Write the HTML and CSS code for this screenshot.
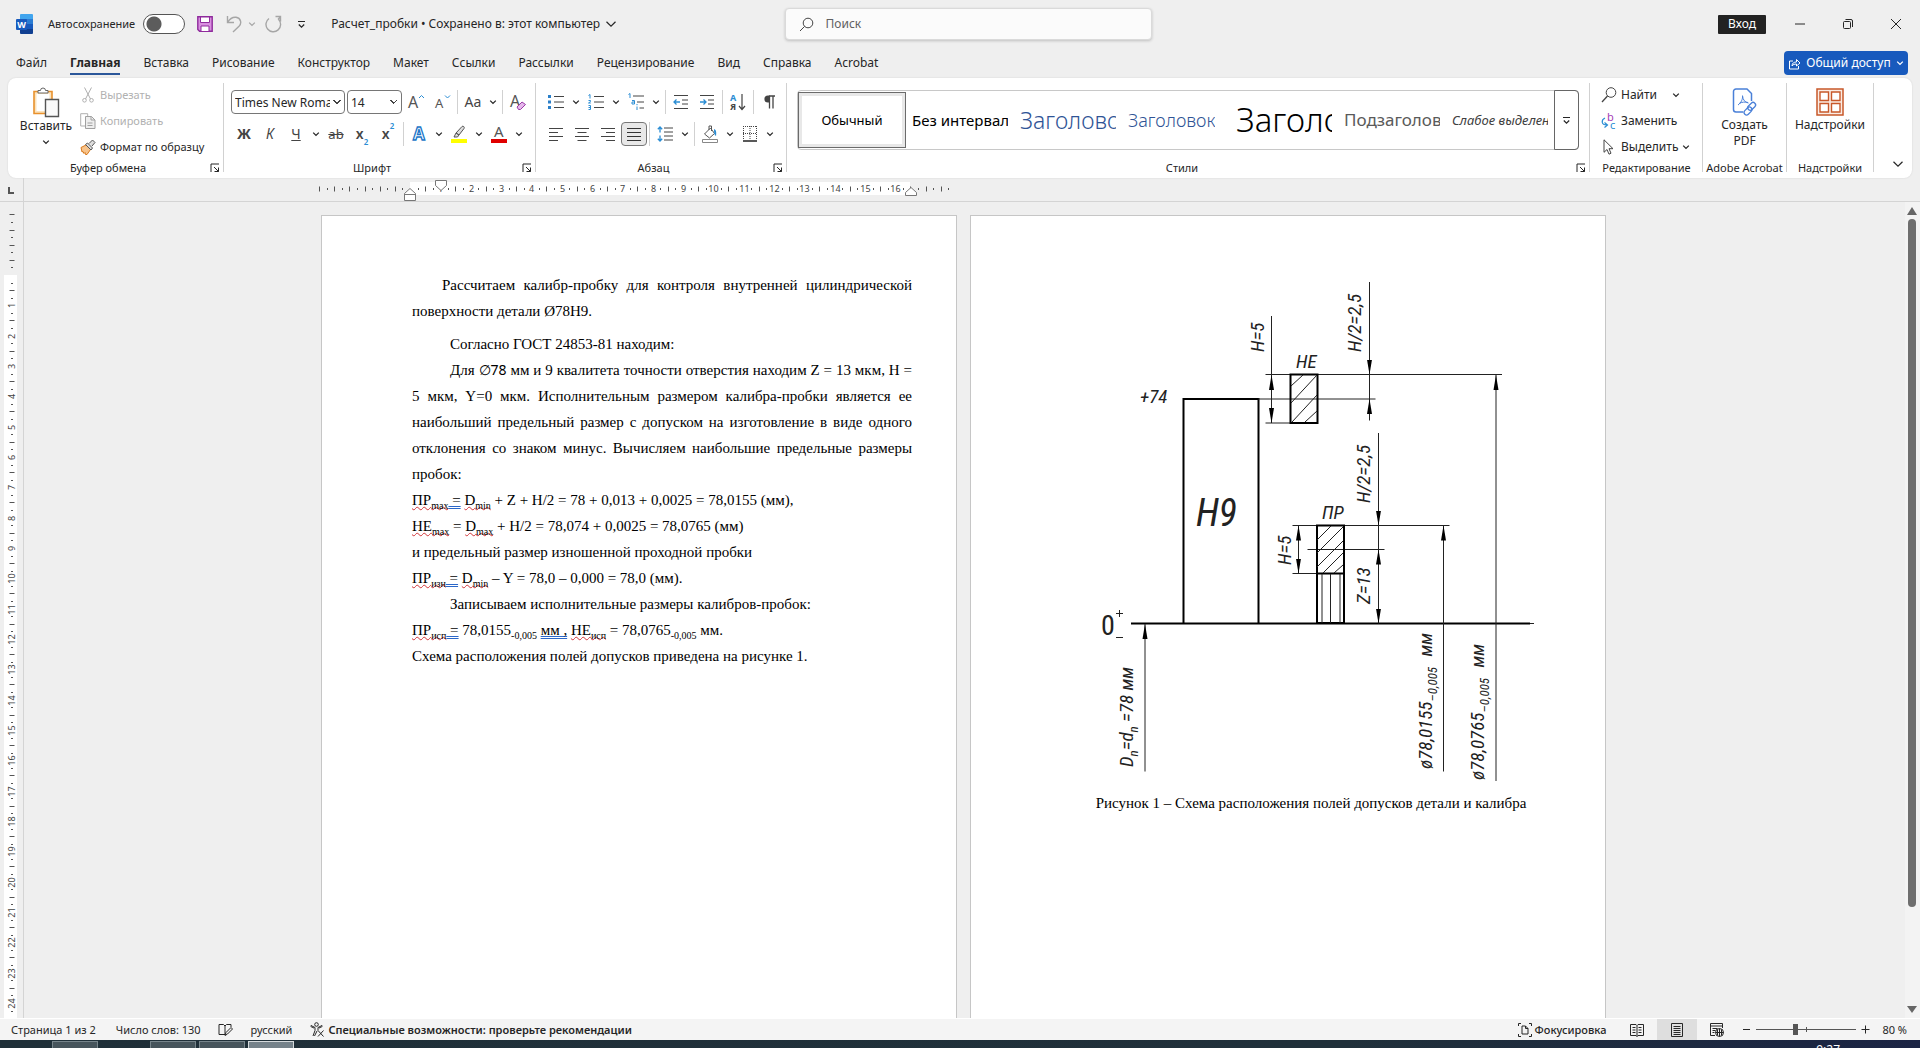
FILE: index.html
```html
<!DOCTYPE html>
<html lang="ru">
<head>
  <meta charset="UTF-8" />
  <meta name="viewport" content="width=device-width, initial-scale=1.0"/>
  <title>Расчет_пробки</title>
  <link rel="stylesheet" href="styles.css">
</head>
<body>
  <!-- shared shapes -->
  <svg class="defs" width="0" height="0" aria-hidden="true">
    <symbol id="chev" viewBox="0 0 8 8"><path d="M1.2 2.6 4 5.4 6.8 2.6" fill="none" stroke="currentColor" stroke-width="1.3"/></symbol>
    <symbol id="launcher" viewBox="0 0 10 10"><path d="M1 9V1h8M4 4l4.5 4.5M8.5 4.5v4h-4" fill="none" stroke="currentColor"/></symbol>
  </svg>

  <header class="titlebar">
    <div class="title-left">
      <svg class="logo" width="17" height="20" viewBox="0 0 17 20">
        <path fill="#41a5ee" d="M5 0h11a1 1 0 0 1 1 1v4H4V1a1 1 0 0 1 1-1z"/>
        <path fill="#2b7cd3" d="M4 5h13v5H4z"/>
        <path fill="#185abd" d="M4 10h13v5H4z"/>
        <path fill="#103f91" d="M4 15h13v4a1 1 0 0 1-1 1H5a1 1 0 0 1-1-1z"/>
        <rect x="0" y="5" width="11" height="11" rx="1" fill="#185abd"/>
        <text x="5.500" y="14" class="logo-letter">W</text>
      </svg>
      <label class="autosave">Автосохранение <input type="checkbox" class="switch"></label>
      <button class="quick save" aria-label="Сохранить">
        <svg width="16" height="16" viewBox="0 0 16 16"><path d="M.8.8h14.4v14.4H2.600L.8 13.400z" fill="#d98fe0" stroke="#8f2b9c" stroke-width="1.400"/><path d="M3.500 1h9v5.500h-9z" fill="#fff" stroke="#8f2b9c"/><path d="M4 15v-5h8v5" fill="#fff" stroke="#8f2b9c"/></svg>
      </button>
      <button class="quick undo muted" aria-label="Отменить">
        <svg width="16" height="18" viewBox="0 0 16 18"><path d="M1.500 1v6.500H8M1.800 7.200C4 3.500 7 2 10 2.300c5 .7 6 6 3 9L7 17" fill="none" stroke="currentColor" stroke-width="1.400"/></svg>
        <svg width="8" height="8"><use href="#chev"/></svg>
      </button>
      <button class="quick muted" aria-label="Повторить">
        <svg width="17" height="18" viewBox="0 0 17 18"><path d="M10.500 1.500h5v5M15.200 2 13 4.500M4 3.500a7.300 7.300 0 1 0 9.500.8" fill="none" stroke="currentColor" stroke-width="1.400"/></svg>
      </button>
      <button class="quick custom" aria-label="Настройка панели"><svg width="9" height="9" viewBox="0 0 9 9"><path d="M1 1.500h7M1.800 4.500 4.500 7.200l2.700-2.700" fill="none" stroke="currentColor" stroke-width="1.200"/></svg></button>
      <button class="doc-name">Расчет_пробки&nbsp;•&nbsp;Сохранено в: этот компьютер <svg width="12" height="12" viewBox="0 0 8 8"><path d="M1 2.500 4 5.500 7 2.500" fill="none" stroke="currentColor" stroke-width=".8"/></svg></button>
    </div>
    <div class="search">
      <svg width="15" height="15" viewBox="0 0 15 15"><circle cx="9" cy="6" r="4.800" fill="none" stroke="#444"/><path d="M5.600 9.400 1 14" stroke="#444"/></svg>
      <input type="text" placeholder="Поиск" aria-label="Поиск">
    </div>
    <div class="title-right">
      <button class="sign-in">Вход</button>
      <button class="win" aria-label="Свернуть"><svg width="12" height="12" viewBox="0 0 12 12"><path d="M1 6h10" stroke="currentColor"/></svg></button>
      <button class="win" aria-label="Восстановить"><svg width="12" height="12" viewBox="0 0 12 12"><rect x="1.500" y="3.500" width="7" height="7" rx="1" fill="none" stroke="currentColor"/><path d="M3.500 1.500H9a1.500 1.500 0 0 1 1.500 1.500v6" fill="none" stroke="currentColor"/></svg></button>
      <button class="win" aria-label="Закрыть"><svg width="12" height="12" viewBox="0 0 12 12"><path d="m1 1 10 10M11 1 1 11" stroke="currentColor"/></svg></button>
    </div>
  </header>

  <nav class="tabs">
    <button>Файл</button>
    <button class="active">Главная</button>
    <button>Вставка</button>
    <button>Рисование</button>
    <button>Конструктор</button>
    <button>Макет</button>
    <button>Ссылки</button>
    <button>Рассылки</button>
    <button>Рецензирование</button>
    <button>Вид</button>
    <button>Справка</button>
    <button>Acrobat</button>
    <button class="share">
      <svg width="13" height="13" viewBox="0 0 13 13"><path d="M5 4H1.500v8h9V9M4 9c0-3 2-4 4.500-4V2.500L12 6 8.500 9V7C6.500 7 5 7.500 4 9z" fill="none" stroke="#fff"/></svg>
      Общий доступ
      <svg width="8" height="8"><use href="#chev"/></svg>
    </button>
  </nav>

  <section class="ribbon">
    <div class="group clipboard">
      <div class="clip-tools">
        <button class="big">
          <svg width="28" height="31" viewBox="0 0 28 31"><path d="M2 4.500h18v22H2z" fill="#fbe3bd" stroke="#e8912d" stroke-width="1.600"/><path d="M4.500 7h13v17h-13z" fill="#fff"/><path d="M6 6V3.500h2.500a2.500 2.500 0 0 1 5 0H16V6z" fill="#fff" stroke="#666"/><path d="M13.500 12.500h13v17h-13z" fill="#fafafa" stroke="#555" stroke-width="1.400"/></svg>
          <span>Вставить</span>
          <svg width="8" height="8"><use href="#chev"/></svg>
        </button>
        <div class="stack">
          <button class="disabled" disabled><svg width="16" height="16" viewBox="0 0 16 16"><path d="M4.500.5 10.500 12M11.500.5 5.500 12" fill="none" stroke="#b0b0b0"/><circle cx="4.500" cy="13.300" r="1.800" fill="none" stroke="#b0b0b0"/><circle cx="11.500" cy="13.300" r="1.800" fill="none" stroke="#b0b0b0"/></svg>Вырезать</button>
          <button class="disabled" disabled><svg width="16" height="16" viewBox="0 0 16 16"><path d="M5 13H.7V.7h7V3" fill="none" stroke="#b0b0b0"/><path d="M5.500 3.500h6l3.500 3.500v8.500H5.500z" fill="#eee" stroke="#a0a0a0"/><path d="M11 3.500V7h4M7.500 10h5M7.500 12.500h5" fill="none" stroke="#a0a0a0"/></svg>Копировать</button>
          <button><svg width="16" height="16" viewBox="0 0 16 16"><path d="M1 8.500 6 6l4.500 4.500L7 15.500H5.500l-.5-2-1 1-1-2-1 .5z" fill="#f7c38b" stroke="#d8791c"/><path d="m5.500 5.500 2-1.500 5 5-1.500 2zM9 4.500 12.500 1l2.500 2.500L12 7" fill="#ddd" stroke="#555"/></svg>Формат по образцу</button>
        </div>
      </div>
      <div class="caption"><span>Буфер обмена</span><button aria-label="Параметры буфера"><svg width="10" height="10"><use href="#launcher"/></svg></button></div>
    </div>
    <i class="divider"></i>

    <div class="group font">
      <div class="row">
        <select class="font-name" aria-label="Шрифт"><option>Times New Roman</option></select>
        <select class="font-size" aria-label="Размер"><option>14</option></select>
        <button class="tool" aria-label="Увеличить шрифт"><svg width="18" height="18" viewBox="0 0 18 18"><text x="1" y="15" class="glyph g16">A</text><path d="m12 5 2.500-2.500L17 5" fill="none" stroke="#2a8dd4"/></svg></button>
        <button class="tool" aria-label="Уменьшить шрифт"><svg width="18" height="18" viewBox="0 0 18 18"><text x="2" y="15" class="glyph g13">A</text><path d="m12 2.500 2.500 2.500L17 2.500" fill="none" stroke="#2a8dd4"/></svg></button>
        <i class="sep"></i>
        <button class="tool letter" aria-label="Регистр">Aa</button><button class="chev" aria-label="Ещё"><svg width="8" height="8"><use href="#chev"/></svg></button>
        <i class="sep"></i>
        <button class="tool" aria-label="Очистить формат"><svg width="18" height="18" viewBox="0 0 18 18"><text x="1" y="14" class="glyph g16">A</text><path d="m8 14 5-5 3.500 2.500-5 5H9.500z" fill="#e6b8ec" stroke="#9b3aa8"/></svg></button>
      </div>
      <div class="row">
        <button class="tool letter bold">Ж</button>
        <button class="tool letter italic">К</button>
        <button class="tool letter under">Ч</button><button class="chev" aria-label="Ещё"><svg width="8" height="8"><use href="#chev"/></svg></button>
        <button class="tool letter strike">ab</button>
        <button class="tool letter xx">x<sub>2</sub></button>
        <button class="tool letter xx">x<sup>2</sup></button>
        <i class="sep"></i>
        <button class="tool" aria-label="Эффекты"><svg width="18" height="18" viewBox="0 0 18 18"><text x="9" y="15" class="effect">A</text></svg></button><button class="chev" aria-label="Ещё"><svg width="8" height="8"><use href="#chev"/></svg></button>
        <button class="tool" aria-label="Цвет выделения"><svg width="18" height="18" viewBox="0 0 18 18"><path d="M1 14h16v4H1z" fill="#ff0"/><path d="m6 8 6-6.500c1-1 3 .5 2 2L9 10zM6 8l3 2-1.500 2H4z" fill="#ddd" stroke="#555"/></svg></button><button class="chev" aria-label="Ещё"><svg width="8" height="8"><use href="#chev"/></svg></button>
        <button class="tool" aria-label="Цвет шрифта"><svg width="18" height="18" viewBox="0 0 18 18"><path d="M1 14h16v4H1z" fill="#e00000"/><text x="4" y="12" class="glyph g15">A</text></svg></button><button class="chev" aria-label="Ещё"><svg width="8" height="8"><use href="#chev"/></svg></button>
      </div>
      <div class="caption"><span>Шрифт</span><button aria-label="Параметры шрифта"><svg width="10" height="10"><use href="#launcher"/></svg></button></div>
    </div>
    <i class="divider"></i>

    <div class="group para">
      <div class="row">
        <button class="tool" aria-label="Маркеры"><svg width="16" height="16" viewBox="0 0 16 16"><path d="M0 1h3v3H0zM0 6.500h3v3H0zM0 12h3v3H0z" fill="#2a7fc9"/><path d="M6 2.500h10M6 8h10M6 13.500h10" stroke="#444"/></svg></button><button class="chev" aria-label="Ещё"><svg width="8" height="8"><use href="#chev"/></svg></button>
        <button class="tool" aria-label="Нумерация"><svg width="16" height="16" viewBox="0 0 16 16"><path d="M.5 1.500 2 .5V4.500M.5 6.500h2v1l-2 1.500h2.300M.5 11.500h2v4h-2M.5 13.500h2" fill="none" stroke="#2a8dd4"/><path d="M6 2.500h10M6 8h10M6 13.500h10" stroke="#444"/></svg></button><button class="chev" aria-label="Ещё"><svg width="8" height="8"><use href="#chev"/></svg></button>
        <button class="tool" aria-label="Многоуровневый список"><svg width="16" height="18" viewBox="0 0 16 18"><path d="M.5 1.500 2 .5V5M4 7.500h2.500V11H4V9h2.500M9 13.500V17M9 11v1.200" fill="none" stroke="#2a8dd4"/><path d="M5 3h11M9 9h7M11.500 15H16" stroke="#444"/></svg></button><button class="chev" aria-label="Ещё"><svg width="8" height="8"><use href="#chev"/></svg></button>
        <i class="sep"></i>
        <button class="tool" aria-label="Уменьшить отступ"><svg width="16" height="16" viewBox="0 0 16 16"><path d="M1 1.500h14M9 6h6M9 10h6M1 14.500h14" stroke="#444"/><path d="M7 8H1m2.500-2.500L1 8l2.500 2.500" fill="none" stroke="#2a8dd4" stroke-width="1.300"/></svg></button>
        <button class="tool" aria-label="Увеличить отступ"><svg width="16" height="16" viewBox="0 0 16 16"><path d="M1 1.500h14M9 6h6M9 10h6M1 14.500h14" stroke="#444"/><path d="M1 8h6M4.500 5.500 7 8l-2.500 2.500" fill="none" stroke="#2a8dd4" stroke-width="1.300"/></svg></button>
        <i class="sep"></i>
        <button class="tool" aria-label="Сортировка"><svg width="18" height="18" viewBox="0 0 18 18"><text x="1" y="8" class="sort-a">А</text><text x="1" y="17" class="sort-ya">Я</text><path d="M13 1v15M10 13l3 3.500L16 13" fill="none" stroke="#444" stroke-width="1.200"/></svg></button>
        <i class="sep"></i>
        <button class="tool" aria-label="Знаки"><svg width="14" height="16" viewBox="0 0 14 16"><path d="M7 2h6M7.500 2v12.500M11 2v12.500" stroke="#444" stroke-width="1.300"/><path d="M7.500 1.400H6a3.500 3.500 0 0 0 0 7.200h1.500z" fill="#444"/></svg></button>
      </div>
      <div class="row">
        <button class="tool" aria-label="По левому краю"><svg width="14" height="14" viewBox="0 0 14 14"><path d="M0 1.500h14M0 5.500h9M0 9.500h14M0 13.500h9" stroke="#444"/></svg></button>
        <button class="tool" aria-label="По центру"><svg width="14" height="14" viewBox="0 0 14 14"><path d="M0 1.500h14M2.500 5.500h9M0 9.500h14M2.500 13.500h9" stroke="#444"/></svg></button>
        <button class="tool" aria-label="По правому краю"><svg width="14" height="14" viewBox="0 0 14 14"><path d="M0 1.500h14M5 5.500h9M0 9.500h14M5 13.500h9" stroke="#444"/></svg></button>
        <button class="tool pressed" aria-label="По ширине"><svg width="14" height="14" viewBox="0 0 14 14"><path d="M0 1.500h14M0 5.500h14M0 9.500h14M0 13.500h14" stroke="#333"/></svg></button>
        <i class="sep"></i>
        <button class="tool" aria-label="Интервал"><svg width="16" height="16" viewBox="0 0 16 16"><path d="M7 2h9M7 6h9M7 10h9M7 14h9" stroke="#444"/><path d="M3 1v5.500M.8 3.300 3 1l2.200 2.300M3 9.500V15M.8 12.700 3 15l2.200-2.300" fill="none" stroke="#2a8dd4" stroke-width="1.300"/></svg></button><button class="chev" aria-label="Ещё"><svg width="8" height="8"><use href="#chev"/></svg></button>
        <i class="sep"></i>
        <button class="tool" aria-label="Заливка"><svg width="18" height="18" viewBox="0 0 18 18"><path d="m3.500 9 6-6 4 5.500-5 4.500zM8 5V1h2.500v5" fill="#fff" stroke="#555"/><path d="M13 4c2.500 1 2.500 4 2 7-2-1-1.500-3-2-5z" fill="#2a8dd4"/><path d="M1.500 14.500h15v3h-15z" fill="#fff" stroke="#888"/></svg></button><button class="chev" aria-label="Ещё"><svg width="8" height="8"><use href="#chev"/></svg></button>
        <button class="tool" aria-label="Границы"><svg width="16" height="16" viewBox="0 0 16 16"><path d="M1.500 0v14M14.500 0v14M8 0v14M1 .5h14M1 7.500h14" stroke="#444" stroke-dasharray="1 1"/><path d="M1 15h14" stroke="#222" stroke-width="1.500"/></svg></button><button class="chev" aria-label="Ещё"><svg width="8" height="8"><use href="#chev"/></svg></button>
      </div>
      <div class="caption"><span>Абзац</span><button aria-label="Параметры абзаца"><svg width="10" height="10"><use href="#launcher"/></svg></button></div>
    </div>
    <i class="divider"></i>

    <div class="group styles">
      <div class="gallery">
        <button class="style selected">Обычный</button>
        <button class="style st-plain"><span>Без интервала</span></button>
        <button class="style st-h1"><span>Заголовок</span></button>
        <button class="style st-h2"><span>Заголовок</span></button>
        <button class="style st-title"><span>Заголовок</span></button>
        <button class="style st-sub"><span>Подзаголовок</span></button>
        <button class="style st-weak"><span>Слабое выделение</span></button>
        <button class="more" aria-label="Ещё стили"><svg width="9" height="9" viewBox="0 0 9 9"><path d="M1 1.500h7M1.800 4.500 4.500 7.200l2.700-2.700" fill="none" stroke="currentColor" stroke-width="1.200"/></svg></button>
      </div>
      <div class="caption"><span>Стили</span><button aria-label="Окно стилей"><svg width="10" height="10"><use href="#launcher"/></svg></button></div>
    </div>
    <i class="divider"></i>

    <div class="group editing">
      <div class="stack">
        <button><svg width="16" height="16" viewBox="0 0 16 16"><circle cx="10" cy="5.500" r="4.800" fill="none" stroke="#444"/><path d="M6.500 9 1 15" stroke="#444" stroke-width="1.300"/></svg>Найти <svg class="far" width="8" height="8"><use href="#chev"/></svg></button>
        <button><svg width="16" height="16" viewBox="0 0 16 16"><text x="6" y="8" class="rep-b">b</text><text x="9" y="16" class="rep-c">c</text><path d="M4 5C0 7 0 12 6 12M3.500 9.500 6.500 12l-3 2.500" fill="none" stroke="#2a8dd4" stroke-width="1.200"/></svg>Заменить</button>
        <button><svg width="16" height="16" viewBox="0 0 16 16"><path d="M3 .8v12.500l3-2.800 2 4.700 2-1-2-4.500h4z" fill="#fff" stroke="#444"/></svg>Выделить <svg width="8" height="8"><use href="#chev"/></svg></button>
      </div>
      <div class="caption"><span>Редактирование</span></div>
    </div>
    <i class="divider"></i>

    <div class="group acrobat">
      <button class="big">
        <svg width="26" height="30" viewBox="0 0 26 30"><path d="M11 25H4a2.500 2.500 0 0 1-2.500-2.500v-18A2.500 2.500 0 0 1 4 2h11l4.500 4.500V14" fill="none" stroke="#4a80d8" stroke-width="1.500"/><path d="M6 18c3-2 5-6 4.500-9.500M10.500 9c.5 4 2.500 6.500 6 7M7 16.500c3-1.500 6-1.800 9-1" fill="none" stroke="#4a80d8"/><rect x="17.500" y="15" width="5" height="9" rx="2.500" fill="none" stroke="#4a80d8" stroke-width="1.300" transform="rotate(45 20 19)"/><rect x="13.500" y="19.500" width="5" height="9" rx="2.500" fill="none" stroke="#4a80d8" stroke-width="1.300" transform="rotate(45 16 24)"/></svg>
        <span>Создать<br>PDF</span>
      </button>
      <div class="caption"><span>Adobe Acrobat</span></div>
    </div>
    <i class="divider"></i>

    <div class="group addins">
      <button class="big">
        <svg width="28" height="30" viewBox="0 0 28 30"><path d="M1 2h26v26H1z" fill="#fbece4" stroke="#c8582a" stroke-width="1.500"/><path d="M4 5h8.500v8.500H4zM15.500 5H24v8.500h-8.500zM4 16.500h8.500V25H4zM15.500 16.500H24V25h-8.500z" fill="#fff" stroke="#c8582a" stroke-width="1.400"/></svg>
        <span>Надстройки</span>
      </button>
      <div class="caption"><span>Надстройки</span></div>
    </div>
    <i class="divider"></i>
    <button class="collapse" aria-label="Свернуть ленту"><svg width="12" height="12" viewBox="0 0 8 8"><path d="M1 2.500 4 5.500 7 2.500" fill="none" stroke="currentColor" stroke-width=".8"/></svg></button>
  </section>

  <main class="workspace">
    <div class="corner"><svg width="8" height="8" viewBox="0 0 8 8"><path d="M2 0v6h5" fill="none" stroke="#555" stroke-width="2"/></svg></div>
    <div class="ruler-h"><svg id="rulerH" width="1285" height="23"></svg></div>
    <div class="ruler-v"><svg id="rulerV" width="23" height="816"></svg></div>

    <div class="canvas">
      <article class="page">
        <p class="lead">Рассчитаем калибр-пробку для контроля внутренней цилиндрической поверхности детали Ø78H9.</p>
        <p class="indent">Согласно ГОСТ 24853-81 находим:</p>
        <p class="indent">Для <span class="dia">∅78</span> мм и 9 квалитета точности отверстия находим Z = 13 мкм, H = 5 мкм, Y=0 мкм. Исполнительным размером калибра-пробки является ее наибольший предельный размер с допуском на изготовление в виде одного отклонения со знаком минус. Вычисляем наибольшие предельные размеры пробок:</p>
        <p><span class="spell">ПР<sub>max</sub></span><span class="grammar"> =</span> <span class="spell">D<sub>min</sub></span> + Z + H/2 = 78 + 0,013 + 0,0025 = 78,0155 (мм),</p>
        <p><span class="spell">НЕ<sub>max</sub></span> = <span class="spell">D<sub>max</sub></span> + H/2 = 78,074 + 0,0025 = 78,0765 (мм)</p>
        <p>и предельный размер изношенной проходной пробки</p>
        <p><span class="spell">ПР<sub>изн</sub></span><span class="grammar"> =</span> <span class="spell">D<sub>min</sub></span> – Y = 78,0 – 0,000 = 78,0 (мм).</p>
        <p class="indent">Записываем исполнительные размеры калибров-пробок:</p>
        <p><span class="spell">ПР<sub>исп</sub></span><span class="grammar"> =</span> 78,0155<sub>-0,005</sub> <span class="grammar">мм ,</span> <span class="spell">НЕ<sub>исп</sub></span> = 78,0765<sub>-0,005</sub> мм.</p>
        <p>Схема расположения полей допусков приведена на рисунке 1.</p>
      </article>

      <article class="page">
        <figure>
          <svg class="scheme" width="500" height="518" viewBox="1061 272 500 518">
            <defs>
              <marker id="arrow" viewBox="0 0 15 6" refX="15" refY="3" markerWidth="15" markerHeight="6" markerUnits="userSpaceOnUse" orient="auto-start-reverse"><path d="M0 .5 15 3 0 5.500z"/></marker>
            </defs>
            <!-- hole tolerance zone -->
            <path class="thick" d="M1183.500 623V399h75v224M1131 623.500h399"/>
            <!-- extension lines -->
            <path class="thin" d="M1265.500 374.500h236.500M1258 399h117.500M1265.500 423h25M1292.500 525.500h157M1292.500 573.500h24M1307.500 549.500h77M1530 623.500h4"/>
            <!-- NE gauge -->
            <path class="thick" d="M1290.500 374.500h27V423h-27z"/>
            <path class="thin" d="m1291 386 12-11M1291 403l26-28M1292 422l25-27M1305 422l12-11"/>
            <!-- PR gauge -->
            <path class="thick" d="M1317 525.500h27V623h-27zM1317 573.500h27"/>
            <path class="thin" d="m1317 540 14-14M1317 553l26-26M1317 567l26-26M1323 573l20-20M1334 573l9-8M1322 574v49M1330.500 574v49M1340 574v49"/>
            <!-- dimension lines -->
            <path class="thin" d="M1271.500 316v59"/>
            <path class="thin" d="M1271.500 375v48" marker-start="url(#arrow)" marker-end="url(#arrow)"/>
            <path class="thin" d="M1369.500 282v92.500" marker-end="url(#arrow)"/>
            <path class="thin" d="M1369.500 374.500V399"/>
            <path class="thin" d="M1369.500 420.500V399" marker-end="url(#arrow)"/>
            <path class="thin" d="M1378.500 433v92.500" marker-end="url(#arrow)"/>
            <path class="thin" d="M1378.500 525.500v24"/>
            <path class="thin" d="M1378.500 549.500v74" marker-start="url(#arrow)" marker-end="url(#arrow)"/>
            <path class="thin" d="M1298.500 525.500v48" marker-start="url(#arrow)" marker-end="url(#arrow)"/>
            <path class="thin" d="M1443.500 771.500v-246" marker-end="url(#arrow)"/>
            <path class="thin" d="M1496 781V375" marker-end="url(#arrow)"/>
            <path class="thin" d="M1145 771.500V624" marker-end="url(#arrow)"/>
            <!-- labels -->
            <text class="cad" x="1140" y="403">+74</text>
            <text class="cad big-cad" x="1196" y="526">H9</text>
            <text class="cad" x="1296" y="368">НЕ</text>
            <text class="cad" x="1322" y="519">ПР</text>
            <text class="cad zero" x="1101" y="635">0</text>
            <path class="thin" d="M1116 613.500h7M1119.500 610v7M1116 637.500h7"/>
            <text class="cad" transform="translate(1264 352) rotate(-90)">H=5</text>
            <text class="cad" transform="translate(1361 352) rotate(-90)">H/2=2,5</text>
            <text class="cad" transform="translate(1370 503) rotate(-90)">H/2=2,5</text>
            <text class="cad" transform="translate(1291 565) rotate(-90)">H=5</text>
            <text class="cad" transform="translate(1370 604) rotate(-90)">Z=13</text>
            <text class="cad" transform="translate(1133 767) rotate(-90)">D<tspan class="low" dy="5">n</tspan><tspan dy="-5">=d</tspan><tspan class="low" dy="5">n</tspan><tspan dy="-5"> =78 мм</tspan></text>
            <text class="cad" transform="translate(1432 769) rotate(-90)">ø78,0155<tspan class="low" dy="5">–0,005</tspan><tspan dy="-5" dx="6"> мм</tspan></text>
            <text class="cad" transform="translate(1484 780) rotate(-90)">ø78,0765<tspan class="low" dy="5">–0,005</tspan><tspan dy="-5" dx="6"> мм</tspan></text>
          </svg>
          <figcaption>Рисунок 1 – Схема расположения полей допусков детали и калибра</figcaption>
        </figure>
      </article>
    </div>

    <div class="scrollbar">
      <svg width="12" height="12" viewBox="0 0 12 12"><path d="M6 2 11 10H1z" fill="#666"/></svg>
      <div class="track"><div class="thumb"></div></div>
      <svg width="12" height="12" viewBox="0 0 12 12"><path d="M6 10 11 3H1z" fill="#666"/></svg>
    </div>
  </main>

  <footer class="status">
    <button class="st-page">Страница 1 из 2</button>
    <button class="st-words">Число слов: 130</button>
    <button class="st-proof" aria-label="Правописание"><svg width="15" height="14" viewBox="0 0 15 14"><path d="M7 11.500H1v-10h4.500L7 3l1.500-1.500H13V4M7 3v8.500M7 12.500l1-3 5-5 1.500 1.500-5 5z" fill="none" stroke="currentColor"/></svg></button>
    <button class="st-lang">русский</button>
    <button class="st-access"><svg width="15" height="15" viewBox="0 0 15 15"><circle cx="6.500" cy="2.500" r="1.800" fill="none" stroke="currentColor"/><path d="M1 3.500 5 5.500v3L3 14M12 3.500 8 5.500v3M1 3.500c-.5 1 0 1.500 3 2.500M12 3.500c.5 1 0 1.500-3 2.500M4.500 14 7 9M8 8.500l5.500 6M13.500 8.500l-5.500 6" fill="none" stroke="currentColor"/></svg>Специальные возможности: проверьте рекомендации</button>
    <div class="status-right">
      <button class="st-focus"><svg width="14" height="14" viewBox="0 0 14 14"><path d="M3 .5H.5V3M11 .5h2.500V3M3 13.500H.5V11M11 13.500h2.500V11M4 3h3.500L10 5.500V11H4zM7.500 3v2.500H10" fill="none" stroke="currentColor"/></svg>Фокусировка</button>
      <button class="view" aria-label="Режим чтения"><svg width="14" height="14" viewBox="0 0 14 14"><path d="M.5 1.500H6L7 2.500l1-1h5.500v11H8l-1 1-1-1H.5zM7 2.500v11M2.500 4.500h3M2.500 7h3M2.500 9.500h3M8.500 4.500h3M8.500 7h3M8.500 9.500h3" fill="none" stroke="currentColor"/></svg></button>
      <button class="view on" aria-label="Разметка"><svg width="12" height="14" viewBox="0 0 12 14"><path d="M.5.500h11v13H.5zM2.500 3.500h7M2.500 5.500h7M2.500 7.500h7M2.500 9.500h7M2.500 11.500h7" fill="none" stroke="currentColor"/></svg></button>
      <button class="view" aria-label="Веб-документ"><svg width="14" height="14" viewBox="0 0 14 14"><path d="M5 12.500H.5V.5h12V5M.5 3h12M2.500 5.500h5M2.500 7.500h3M2.500 9.500h2" fill="none" stroke="currentColor"/><circle cx="9.500" cy="9.500" r="4" fill="none" stroke="currentColor"/><path d="M5.500 9.500h8M9.500 5.500v8M7.500 6.500v6M11.500 6.500v6" fill="none" stroke="currentColor"/></svg></button>
      <button class="zoom-btn" aria-label="Уменьшить"><svg width="9" height="9" viewBox="0 0 9 9"><path d="M1 4.500h7" stroke="currentColor"/></svg></button>
      <input class="zoom" type="range" min="0" max="100" value="39" aria-label="Масштаб">
      <button class="zoom-btn" aria-label="Увеличить"><svg width="9" height="9" viewBox="0 0 9 9"><path d="M.5 4.500h8M4.500.5v8" stroke="currentColor"/></svg></button>
      <button class="percent">80 %</button>
    </div>
  </footer>

  <div class="taskbar">
    <div class="apps"><i class="app"></i><i class="app second"></i><i class="app"></i><i class="app current"></i></div>
    <span class="clock">9:27</span>
  </div>

  <script src="script.js"></script>
</body>
</html>
```

FILE: styles.css
```css
* {
  box-sizing: border-box;
}
body {
  margin: 0;
  height: 100vh;
  overflow: hidden;
  display: flex;
  flex-direction: column;
  background: #efefef;
  color: #262626;
  font-family: "Noto Sans", sans-serif;
  font-size: 12px;
  line-height: 16px;
}
button {
  border: 0;
  padding: 0;
  background: none;
  color: inherit;
  font: inherit;
  white-space: nowrap;
  display: flex;
  align-items: center;
  justify-content: center;
}
svg {
  display: block;
  flex: none;
}
.defs {
  position: absolute;
}

/* title bar */
.titlebar {
  display: grid;
  grid-template-columns: 1fr 367px 1fr;
  align-items: center;
  height: 48px;
  padding-left: 16px;
}
.title-left, .title-right {
  display: flex;
  align-items: center;
}
.title-right {
  justify-content: flex-end;
}
.logo-letter {
  font: bold 9px "Noto Sans", sans-serif;
  fill: #fff;
  text-anchor: middle;
}
.autosave {
  display: flex;
  align-items: center;
  gap: 8px;
  margin: 0 12px 0 15px;
  font-size: 11px;
}
.switch {
  appearance: none;
  width: 42px;
  height: 20px;
  margin: 0;
  border: 1px solid #555;
  border-radius: 10px;
  background: radial-gradient(circle at 10px 9px, #5c5c5c 7px, transparent 8px) #fff;
}
.quick {
  margin-right: 13px;
}
.quick.undo {
  gap: 6px;
  margin-right: 9px;
}
.quick.custom {
  margin: 0 25px 0 2px;
}
.muted {
  color: #a6a6a6;
}
.doc-name {
  gap: 5px;
  font-size: 12px;
}
.search {
  display: flex;
  align-items: center;
  gap: 12px;
  height: 32px;
  padding: 0 13px;
  border: 1px solid #dadada;
  border-radius: 4px;
  background: #fbfbfb;
  box-shadow: 0 1px 3px rgba(0,0,0,0.2);
}
.search input {
  flex: 1;
  border: 0;
  padding: 0;
  background: none;
  font: inherit;
}
.search input::placeholder {
  color: #616161;
}
.sign-in {
  width: 48px;
  height: 19px;
  margin-right: 10px;
  background: #222;
  color: #fff;
  border-radius: 1px;
}
.win {
  width: 48px;
  height: 32px;
}

/* tabs */
.tabs {
  display: flex;
  gap: 23px;
  height: 30px;
  padding: 0 12px 0 16px;
}
.tabs button {
  height: 27px;
  padding-top: 5px;
  border-bottom: 2px solid transparent;
}
.tabs .active {
  border-color: #2b579a;
  font-weight: bold;
}
.tabs .share {
  gap: 5px;
  width: 124px;
  height: 24px;
  margin: 3px 0 0 auto;
  padding: 0;
  border: 0;
  border-radius: 4px;
  background: #185abd;
  color: #fff;
}

/* ribbon */
.ribbon {
  display: flex;
  height: 100px;
  margin: 0 8px;
  border-radius: 8px;
  background: #fff;
  box-shadow: 0 0 2px rgba(0,0,0,0.12);
}
.divider {
  width: 1px;
  margin: 5px 0 6px;
  background: #d1d1d1;
}
.group {
  display: flex;
  flex-direction: column;
  padding: 12px 2px 2px 7px;
}
.row {
  display: flex;
  align-items: center;
  height: 24px;
  margin-bottom: 8px;
}
.caption {
  display: flex;
  height: 16px;
  margin: auto 0 0 -8px;
  font-size: 11px;
}
.caption span {
  flex: 1;
  text-align: center;
  white-space: nowrap;
}
.caption button {
  width: 12px;
}
.tool {
  width: 26px;
  height: 24px;
  color: #444;
}
.chev {
  width: 14px;
  height: 24px;
}
.sep {
  width: 1px;
  height: 24px;
  margin: 0 2px;
  background: #d1d1d1;
}
.pressed {
  border: 1px solid #777;
  border-radius: 4px;
  background: #e8e8e8;
}
.glyph {
  font-family: "Noto Sans", sans-serif;
  fill: #555;
}
.g16 {
  font-size: 16px;
}
.g15 {
  font-size: 15px;
}
.g13 {
  font-size: 13px;
}
.letter {
  font-size: 14px;
}
.bold {
  font-weight: bold;
}
.italic {
  font-style: italic;
}
.under {
  text-decoration: underline;
}
.strike {
  font-size: 13px;
  text-decoration: line-through;
}
.xx {
  font-weight: 600;
}
.xx sub, .xx sup {
  color: #2a8dd4;
  font-size: 8px;
  line-height: 8px;
}
.xx sub {
  align-self: flex-end;
}
.xx sup {
  align-self: flex-start;
}
.effect {
  font: bold 17px "Noto Sans", sans-serif;
  text-anchor: middle;
  fill: #fff;
  stroke: #2176c7;
  stroke-width: 1.3px;
}
.sort-a, .sort-ya {
  font: bold 9px "Noto Sans", sans-serif;
  fill: #2a8dd4;
}
.sort-ya {
  fill: #444;
}
.rep-b, .rep-c {
  font: 11px "Noto Sans", sans-serif;
  fill: #a33bb5;
}
.rep-c {
  fill: #2a8dd4;
}
.clipboard, .editing {
  padding-top: 4px;
}
.clipboard {
  width: 215px;
}
.clip-tools {
  display: flex;
  gap: 3px;
}
.big {
  flex-direction: column;
  justify-content: flex-start;
  padding-top: 5px;
}
.clipboard .big {
  width: 62px;
}
.big span {
  margin-bottom: 4px;
}
.stack button {
  height: 26px;
  gap: 4px;
  font-size: 12px;
}
.clipboard .stack button {
  font-size: 11px;
}
.disabled {
  color: #b1b1b1;
}
.font {
  width: 311px;
}
.font-name, .font-size {
  appearance: none;
  height: 24px;
  padding: 0 14px 0 3px;
  border: 1px solid #767676;
  border-radius: 4px;
  background: linear-gradient(45deg, transparent 50%, #444 50%, #444 65%, transparent 65%) no-repeat right 7px center / 4px 4px,
    linear-gradient(-45deg, transparent 50%, #444 50%, #444 65%, transparent 65%) no-repeat right 3px center / 4px 4px, #fff;
  color: #262626;
  font: 12px "Noto Sans", sans-serif;
}
.font-name {
  width: 114px;
  margin-right: 2px;
  text-overflow: clip;
}
.font-size {
  width: 55px;
  margin-right: 1px;
}
.para {
  width: 250px;
}
.styles {
  flex: 1;
  min-width: 0;
  padding-left: 10px;
}
.gallery {
  display: flex;
  height: 60px;
  margin-right: 8px;
  border: 1px solid #c8c8c8;
  border-radius: 4px;
}
.style {
  width: 108px;
  margin: 1px 0;
  padding: 0 6px;
  justify-content: flex-start;
  color: #000;
}
.style span {
  overflow: hidden;
}
.selected {
  justify-content: center;
  border: 1px solid #6b6b6b;
  box-shadow: inset 0 0 0 3px #e8e8e8;
  font-size: 13px;
}
.st-plain {
  font-size: 15px;
  line-height: 20px;
}
.st-h1 {
  font-size: 23px;
  font-weight: 300;
  line-height: 32px;
  color: #2f5496;
}
.st-h2 {
  font-size: 18px;
  font-weight: 300;
  line-height: 24px;
  color: #2f5496;
}
.st-title {
  font-size: 33px;
  font-weight: 300;
  line-height: 44px;
}
.st-sub {
  font-size: 17px;
  line-height: 24px;
  color: #5a5a5a;
}
.st-weak {
  font-size: 13px;
  font-style: italic;
  color: #404040;
}
.more {
  width: 25px;
  margin: -1px -1px -1px auto;
  border: 1px solid #666;
  border-radius: 0 4px 4px 0;
}
.editing {
  width: 112px;
  padding-left: 11px;
}
.editing .far {
  margin-left: 11px;
}
.acrobat, .addins {
  width: 83px;
  padding: 4px 2px 2px;
}
.acrobat .caption, .addins .caption {
  margin-left: 0;
}
.addins {
  width: 86px;
}
.collapse {
  align-self: flex-end;
  flex: none;
  width: 38px;
  height: 28px;
  padding-left: 10px;
}

/* document area */
.workspace {
  flex: 1;
  min-height: 0;
  display: grid;
  grid-template-columns: 24px 1fr 15px;
  grid-template-rows: 24px 1fr;
}
.corner, .ruler-v {
  border-right: 1px solid #d4d4d4;
}
.corner, .ruler-h {
  border-bottom: 1px solid #d4d4d4;
}
.corner {
  padding: 9px 0 0 7px;
}
.ruler-h {
  grid-column: 2 / 4;
  display: flex;
  justify-content: center;
  padding-right: 17px;
  overflow: hidden;
}
.ruler-h svg {
  overflow: visible;
}
.ruler-v {
  overflow: hidden;
}
.ruler-fill {
  fill: #fff;
}
.ruler-tick {
  stroke: #555;
}
.ruler-num {
  font: 9px "Noto Sans", sans-serif;
  fill: #444;
  text-anchor: middle;
}
.ruler-mark {
  fill: #fff;
  stroke: #777;
}
.canvas {
  display: flex;
  justify-content: center;
  gap: 13px;
  padding: 13px 2px 0 0;
  overflow: hidden;
}
.page {
  width: 636px;
  height: 900px;
  padding: 56px 44px 0 90px;
  border: 1px solid #c6c6c6;
  background: #fff;
  color: #000;
  font-family: "Liberation Serif", serif;
  font-size: 15px;
  line-height: 26px;
}
.page p {
  margin: 0;
  text-align: justify;
}
.page .lead {
  margin-bottom: 7px;
  text-indent: 30px;
}
.page .indent {
  text-indent: 38px;
}
.page sub {
  font-size: 10px;
  line-height: 0;
}
.dia {
  font-family: "Noto Sans", sans-serif;
  font-size: 14px;
  line-height: 20px;
}
.spell {
  text-decoration: underline wavy #d13438 1px;
  text-decoration-skip-ink: none;
}
.grammar {
  text-decoration: underline double #2b67c9 1px;
  text-decoration-skip-ink: none;
}
figure {
  margin: 0;
}
figcaption {
  text-align: center;
}
.thick {
  fill: none;
  stroke: #000;
  stroke-width: 2px;
}
.thin {
  fill: none;
  stroke: #222;
}
.cad {
  font: italic 19px "Liberation Sans Narrow", "Roboto Condensed", "Open Sans Condensed", sans-serif;
  fill: #222;
}
.big-cad {
  font-size: 38px;
}
.zero {
  font-size: 28px;
  font-style: normal;
}
.low {
  font-size: 13px;
}
.scrollbar {
  display: flex;
  flex-direction: column;
  align-items: center;
  padding: 3px 2px 3px 0;
  background: #f3f3f3;
}
.track {
  flex: 1;
  width: 8px;
  margin: 2px 0;
}
.thumb {
  height: 88%;
  border-radius: 4px;
  background: #6e6e6e;
}

/* status bar */
.status {
  display: flex;
  align-items: center;
  height: 22px;
  padding: 0 13px 0 11px;
  border-top: 1px solid #fff;
  background: #f4f4f4;
  font-size: 11px;
}
.st-page, .st-words {
  margin-right: 20px;
}
.st-proof, .st-lang {
  margin-right: 18px;
}
.st-proof {
  margin-left: -3px;
}
.st-access {
  gap: 3px;
  font-weight: 600;
}
.status-right {
  display: flex;
  align-items: center;
  height: 100%;
  margin-left: auto;
}
.st-focus {
  gap: 3px;
  margin-right: 11px;
  font-weight: 500;
}
.view {
  width: 40px;
  height: 100%;
}
.on {
  background: #dedede;
}
.zoom-btn {
  width: 9px;
  margin: 0 5px;
}
.zoom {
  appearance: none;
  width: 100px;
  height: 12px;
  margin: 0;
  background: linear-gradient(#555, #555) no-repeat center / 100% 1px,
    linear-gradient(#555, #555) no-repeat center / 1px 5px;
}
.zoom::-webkit-slider-thumb {
  appearance: none;
  width: 5px;
  height: 11px;
  background: #555;
}
.percent {
  margin-left: 7px;
}

/* system taskbar */
.taskbar {
  display: flex;
  justify-content: space-between;
  height: 8px;
  padding: 0 80px 0 52px;
  overflow: hidden;
  background: linear-gradient(90deg, #1f2f38, #20303a 70%, #1b2444);
  color: #fff;
}
.apps {
  display: flex;
  gap: 3px;
  padding-top: 1px;
}
.app {
  width: 46px;
  height: 12px;
  border: 1px solid #76848a;
  background: #46545b;
}
.app.second {
  margin-left: 49px;
}
.app.current {
  border-color: #d5dadc;
  background: #75828a;
}
.clock {
  padding-top: 2px;
}
```

FILE: script.js
```js
const NS = 'http://www.w3.org/2000/svg';
const CM = 30.33; // one centimetre at 80 %

function add(svg, tag, attrs, text) {
  const el = document.createElementNS(NS, tag);
  for (const key in attrs) el.setAttribute(key, attrs[key]);
  if (text !== undefined) el.textContent = text;
  svg.appendChild(el);
}

// steps are quarters of a centimetre counted from the margin
function drawRuler(svg, zero, first, last, end, vertical) {
  const mid = 11;
  if (vertical) add(svg, 'rect', { class: 'ruler-fill', x: 4, y: zero, width: 13, height: end });
  else add(svg, 'rect', { class: 'ruler-fill', x: zero, y: 4, width: end, height: 13 });

  for (let i = first; i <= last; i++) {
    if (i === 0) continue;
    const pos = Math.round(zero + i * CM / 4) + 0.5;
    const cm = i / 4;
    if (i > 0 && i % 4 === 0 && i * CM / 4 < end) {
      if (vertical) add(svg, 'text', { class: 'ruler-num', transform: `translate(15 ${pos}) rotate(-90)` }, cm);
      else add(svg, 'text', { class: 'ruler-num', x: pos, y: 14 }, cm);
      continue;
    }
    const half = i % 2 === 0 ? 2.5 : 1;
    if (vertical) add(svg, 'line', { class: 'ruler-tick', x1: mid + 1 - half, x2: mid + 1 + half, y1: pos, y2: pos });
    else add(svg, 'line', { class: 'ruler-tick', x1: pos, x2: pos, y1: mid - half, y2: mid + half });
  }
}

const h = document.getElementById('rulerH');
drawRuler(h, 89, -12, 71, 500, false);
add(h, 'path', { class: 'ruler-mark', d: 'M114.5 2.500h11v5l-5.500 5-5.500-5z' });
add(h, 'path', { class: 'ruler-mark', d: 'M83.500 15.500l5.500-5 5.500 5v7h-11zM83.500 16.500h11' });
add(h, 'path', { class: 'ruler-mark', d: 'M584.500 14.500l5.500-5 5.500 5v3h-11z' });
drawRuler(document.getElementById('rulerV'), 73, -8, 98, 800, true);
```
